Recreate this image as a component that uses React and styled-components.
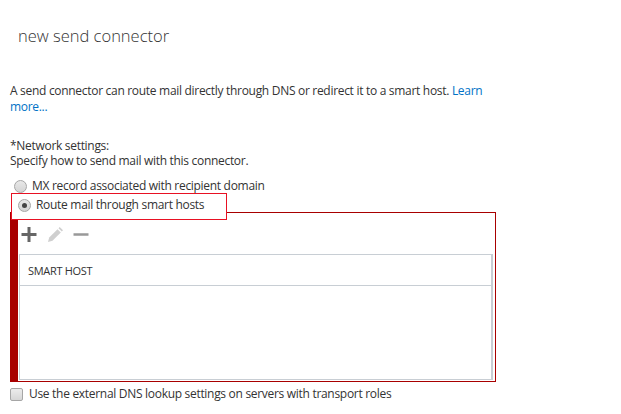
import React from "react";
import styled, { createGlobalStyle } from "styled-components";

const GlobalStyle = createGlobalStyle`
  html, body {
    margin: 0;
    padding: 0;
    background: #fff;
  }
  body {
    font-family: "Open Sans", "Noto Sans", "Liberation Sans", sans-serif;
    font-size: 12px;
    letter-spacing: -0.3px;
    color: #333;
  }
`;

const Page = styled.div`
  width: 621px;
  height: 414px;
  overflow: hidden;
  padding: 0 0 0 10px;
  box-sizing: border-box;
`;

const Title = styled.h1`
  margin: 24px 0 0 8px;
  font-size: 16.5px;
  line-height: 24px;
  font-weight: 300;
  letter-spacing: 0;
  color: #333;
`;

const Intro = styled.p`
  margin: 35px 0 0;
  width: 480px;
  line-height: 16px;
`;

const Link = styled.a`
  color: #0072c6;
  text-decoration: none;
  cursor: pointer;
`;

const Section = styled.div`
  margin-top: 23px;
  line-height: 15px;
`;

const Options = styled.div`
  margin-top: 10px;
  display: flex;
  flex-direction: column;
`;

const OptionRow = styled.label`
  display: flex;
  align-items: center;
  gap: 5px;
  height: 16px;
  padding-left: 4px;
  line-height: 16px;
`;

const Highlight = styled.div`
  position: relative;
  z-index: 1;
  width: 216px;
  box-sizing: border-box;
  margin: -1px 0 0 1px;
  padding: 3px 0 6px 2px;
  border: 1px solid #e81123;
  background: #fff;
`;

const Radio = styled.span`
  width: 11px;
  height: 11px;
  border-radius: 50%;
  border: 1px solid #a6a6a6;
  background: linear-gradient(#e8e8e8, #d4d4d4);
  display: flex;
  align-items: center;
  justify-content: center;
  flex-shrink: 0;

  &::after {
    content: "";
    width: 5px;
    height: 5px;
    border-radius: 50%;
    background: ${(p) => (p.checked ? "#444" : "transparent")};
  }
`;

const ListBox = styled.div`
  margin-top: -8px;
  width: 486px;
  height: 170px;
  box-sizing: border-box;
  border: 1px solid #a80000;
  border-left: 8px solid #a80000;
  display: flex;
  flex-direction: column;
`;

const Toolbar = styled.div`
  display: flex;
  align-items: center;
  gap: 10px;
  padding: 14px 0 0 3px;
  height: 15px;
`;

const ToolButton = styled.button`
  border: 0;
  background: none;
  padding: 0;
  width: 16px;
  height: 15px;
  display: flex;
  cursor: pointer;
`;

const Grid = styled.div`
  margin: 12px 2px 1px 1px;
  flex: 1;
  border: 1px solid #c8ced4;
  border-right-width: 2px;
  display: flex;
  flex-direction: column;
`;

const GridHeader = styled.div`
  height: 30px;
  border-bottom: 1px solid #c8ced4;
  display: flex;
  align-items: center;
  padding-left: 8px;
  font-size: 11px;
  color: #333;
`;

const CheckRow = styled.label`
  margin-top: 4px;
  display: flex;
  align-items: center;
  gap: 6px;
  line-height: 16px;
`;

const CheckBox = styled.span`
  width: 11px;
  height: 11px;
  border: 1px solid #a6a6a6;
  border-radius: 2px;
  background: linear-gradient(#ececec, #d6d6d6);
  flex-shrink: 0;
`;

const PlusIcon = () => (
  <svg width="16" height="15" viewBox="0 0 16 15">
    <path d="M8 0v15M0.5 7.5h15" stroke="#666" strokeWidth="3" />
  </svg>
);

const PencilIcon = () => (
  <svg width="16" height="15" viewBox="0 0 16 15">
    <path d="M1 15l1.2-4.5 8.3-8.3 3.3 3.3-8.3 8.3z" fill="#cfcfcf" />
    <path d="M11.5 1.2l1.2-1.2 3.3 3.3-1.2 1.2z" fill="#cfcfcf" />
  </svg>
);

const MinusIcon = () => (
  <svg width="16" height="15" viewBox="0 0 16 15">
    <path d="M0.5 7.5h15" stroke="#999" strokeWidth="2.5" />
  </svg>
);

export default function App() {
  return (
    <Page>
      <GlobalStyle />
      <Title>new send connector</Title>
      <Intro>
        A send connector can route mail directly through DNS or redirect it to a smart host.{" "}
        <Link>Learn more...</Link>
      </Intro>
      <Section>
        <div>*Network settings:</div>
        <div>Specify how to send mail with this connector.</div>
      </Section>
      <Options>
        <OptionRow>
          <Radio />
          MX record associated with recipient domain
        </OptionRow>
        <Highlight>
          <OptionRow>
            <Radio checked />
            Route mail through smart hosts
          </OptionRow>
        </Highlight>
      </Options>
      <ListBox>
        <Toolbar>
          <ToolButton title="add">
            <PlusIcon />
          </ToolButton>
          <ToolButton title="edit">
            <PencilIcon />
          </ToolButton>
          <ToolButton title="remove">
            <MinusIcon />
          </ToolButton>
        </Toolbar>
        <Grid>
          <GridHeader>SMART HOST</GridHeader>
        </Grid>
      </ListBox>
      <CheckRow>
        <CheckBox />
        Use the external DNS lookup settings on servers with transport roles
      </CheckRow>
    </Page>
  );
}
